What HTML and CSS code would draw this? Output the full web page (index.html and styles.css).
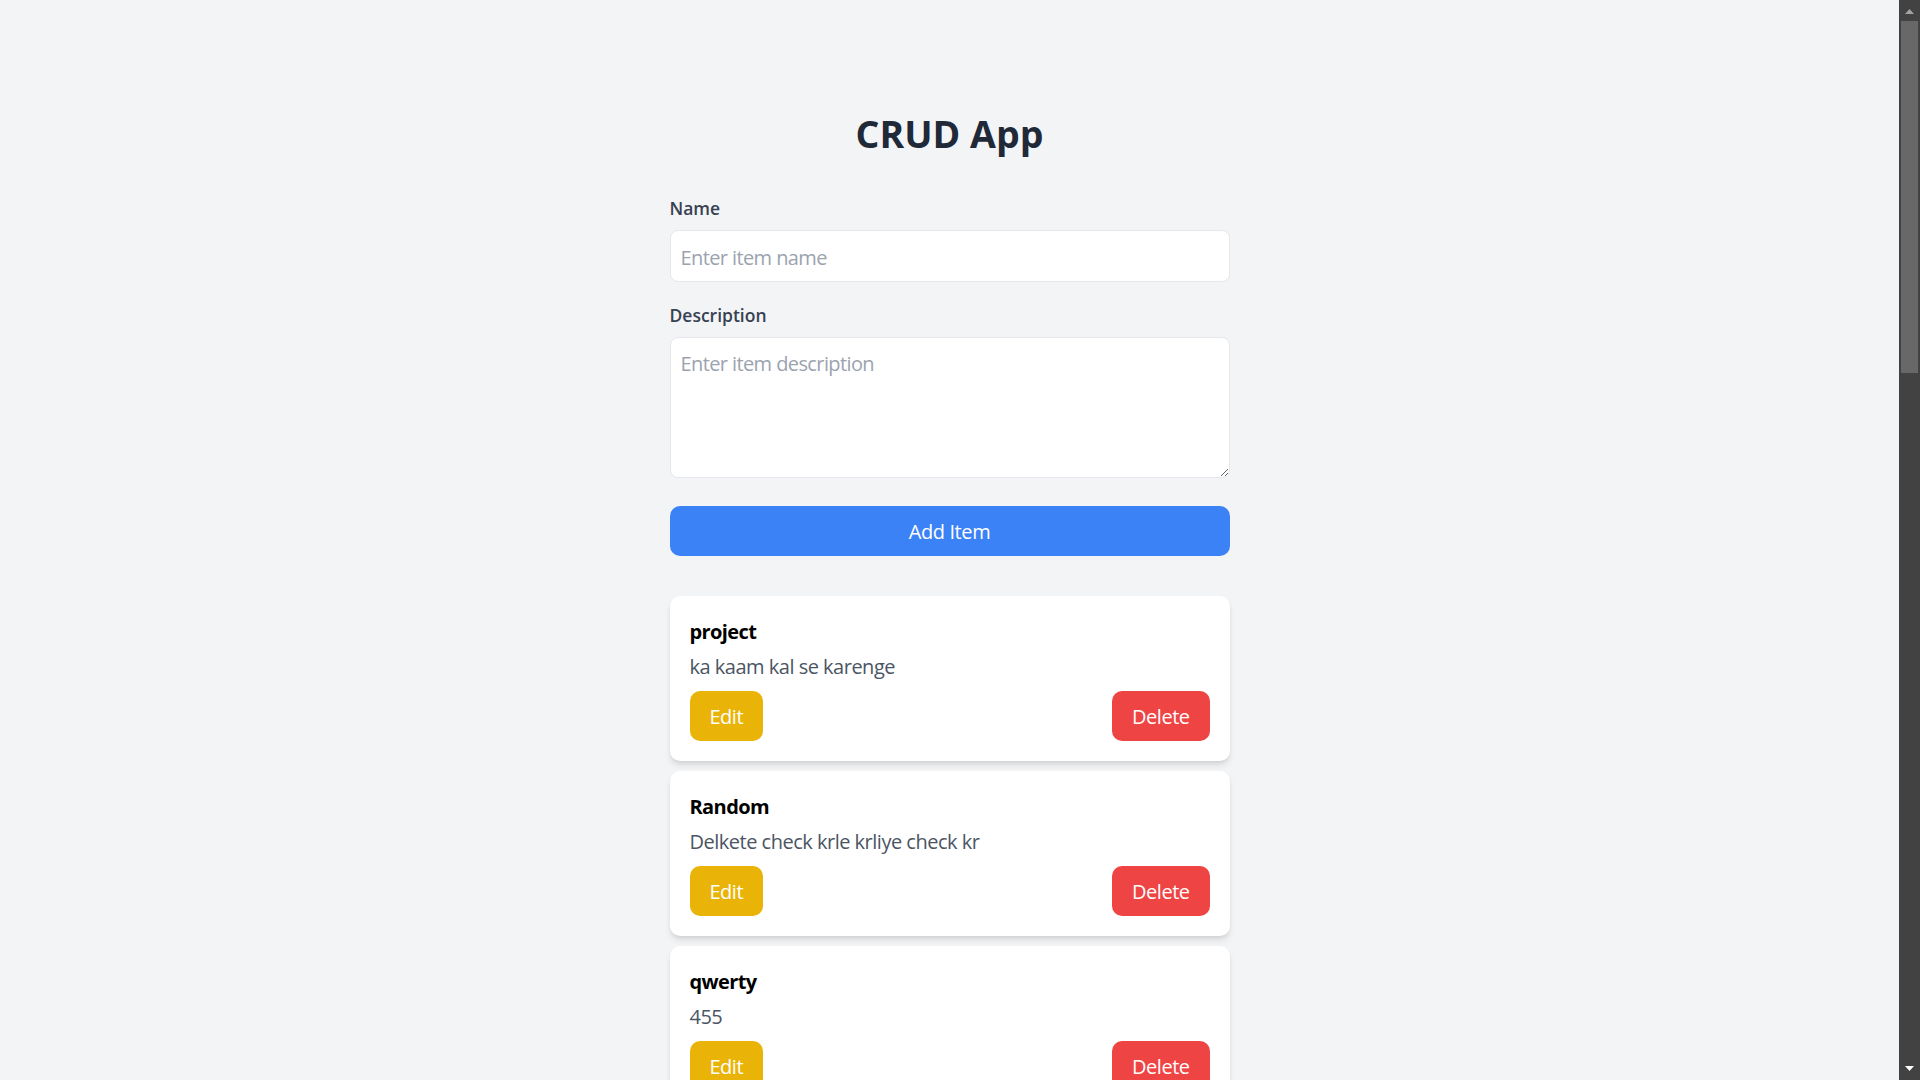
FILE: index.html
```html
<!DOCTYPE html>
<html lang="en">
<head>
<meta charset="utf-8">
<title>CRUD App</title>
<link rel="stylesheet" href="styles.css">
</head>
<body>
<div class="window">
  <main class="viewport">
    <div class="container">
      <h1 class="app-title">CRUD App</h1>
      <form class="item-form">
        <div class="field">
          <label class="field-label" for="name">Name</label>
          <input class="field-input" id="name" type="text" placeholder="Enter item name">
        </div>
        <div class="field field-desc">
          <label class="field-label" for="desc">Description</label>
          <textarea class="field-input field-textarea" id="desc" placeholder="Enter item description"></textarea>
        </div>
        <button type="button" class="btn-add">Add Item</button>
      </form>
      <ul class="item-list">
        <li class="item-card"><h2 class="item-title">project</h2><p class="item-desc">ka kaam kal se karenge</p><div class="item-actions"><button class="btn btn-edit">Edit</button><button class="btn btn-delete">Delete</button></div></li>
        <li class="item-card"><h2 class="item-title">Random</h2><p class="item-desc">Delkete check krle krliye check kr</p><div class="item-actions"><button class="btn btn-edit">Edit</button><button class="btn btn-delete">Delete</button></div></li>
        <li class="item-card"><h2 class="item-title">qwerty</h2><p class="item-desc">455</p><div class="item-actions"><button class="btn btn-edit">Edit</button><button class="btn btn-delete">Delete</button></div></li>
      </ul>
    </div>
  </main>
  <div class="scrollbar" aria-hidden="true">
    <div class="sb-btn">
      <svg width="9" height="5" viewBox="0 0 9 5"><polygon points="4.5,0 9,5 0,5" fill="#a3a3a3"/></svg>
    </div>
    <div class="sb-track">
      <div class="sb-thumb"></div>
    </div>
    <div class="sb-btn sb-btn-down">
      <svg width="9" height="5" viewBox="0 0 9 5"><polygon points="0,0 9,0 4.5,5" fill="#ffffff"/></svg>
    </div>
  </div>
</div>
</body>
</html>
```
FILE: styles.css
```css
html,
body {
  margin: 0;
  height: 100%;
  background: #f3f4f6;
}
body {
  font-family: "Open Sans", "Noto Sans", "Liberation Sans", sans-serif;
  color: #000;
  overflow: hidden;
}
.window {
  display: flex;
  height: 100vh;
}
.viewport {
  flex: 1;
  min-width: 0;
  height: 100vh;
  overflow-y: auto;
  scrollbar-width: none;
  box-sizing: border-box;
  padding: 111px 0 40px;
}
.viewport::-webkit-scrollbar {
  display: none;
}

/* window scrollbar (dark) */
.scrollbar {
  width: 21px;
  flex: none;
  display: flex;
  flex-direction: column;
  background: #424242;
}
.sb-btn {
  height: 21px;
  flex: none;
  display: flex;
  justify-content: center;
  padding-top: 9px;
  box-sizing: border-box;
}
.sb-btn svg {
  display: block;
}
.sb-btn-down {
  padding-top: 7px;
}
.sb-track {
  flex: 1;
  padding: 0 2px;
}
.sb-thumb {
  height: 352px;
  background: #686868;
}

.container {
  width: 560px;
  margin: 0 auto;
}
.app-title {
  margin: 0 0 39px;
  font-size: 37.5px;
  line-height: 45px;
  font-weight: 700;
  text-align: center;
  color: #1f2937;
}
.item-form {
  margin: 0 0 40px;
}
.field {
  margin-bottom: 20px;
}
.field-desc {
  margin-bottom: 28px;
}
.field-label {
  display: block;
  padding-top: 1px;
  margin-bottom: 9px;
  font-size: 17.5px;
  line-height: 25px;
  font-weight: 600;
  color: #374151;
}
.field-input {
  display: block;
  width: 100%;
  box-sizing: border-box;
  height: 52px;
  padding: 11px 10px 9px;
  border: 1px solid #e5e7eb;
  border-radius: 8px;
  background: #fff;
  font-family: inherit;
  font-size: 20px;
  line-height: 30px;
  letter-spacing: -0.6px;
  color: #111827;
  outline: none;
}
.field-input::placeholder {
  color: #9ca3af;
}
.field-textarea {
  height: 141px;
  resize: vertical;
}
.btn-add {
  display: block;
  width: 100%;
  height: 50px;
  border: none;
  border-radius: 10px;
  background: #3b82f6;
  color: #fff;
  font-family: inherit;
  font-size: 20px;
  line-height: 30px;
  letter-spacing: -0.4px;
  padding-top: 2px;
  cursor: pointer;
}
.item-list {
  list-style: none;
  margin: 0;
  padding: 0;
  display: flex;
  flex-direction: column;
  gap: 10px;
}
.item-card {
  background: #fff;
  border-radius: 10px;
  padding: 20px;
  box-shadow: 0 5px 7.5px -1.25px rgba(0, 0, 0, 0.1), 0 2.5px 5px -2.5px rgba(0, 0, 0, 0.1);
}
.item-title {
  margin: 0 0 5px;
  padding-top: 1px;
  height: 30px;
  box-sizing: border-box;
  font-size: 20px;
  line-height: 30px;
  font-weight: 700;
  letter-spacing: -0.6px;
  color: #000;
}
.item-desc {
  margin: 0;
  padding-top: 1px;
  height: 30px;
  box-sizing: border-box;
  font-size: 20px;
  line-height: 30px;
  letter-spacing: -0.5px;
  color: #4b5563;
}
.item-actions {
  display: flex;
  justify-content: space-between;
  margin-top: 10px;
}
.btn {
  padding: 11px 20px 9px;
  border: none;
  border-radius: 10px;
  color: #fff;
  font-family: inherit;
  font-size: 20px;
  line-height: 30px;
  letter-spacing: -0.5px;
  cursor: pointer;
}
.btn-edit {
  background: #eab308;
}
.btn-delete {
  background: #ef4444;
}
```
